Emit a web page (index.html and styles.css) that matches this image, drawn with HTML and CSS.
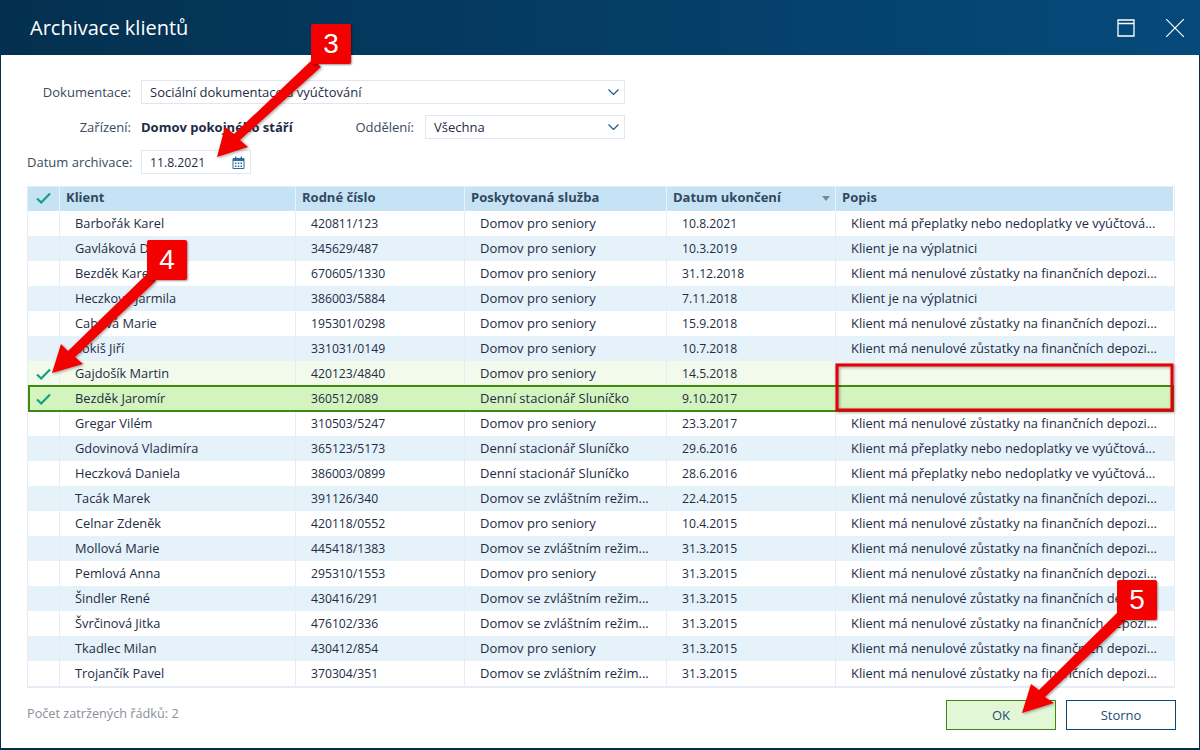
FILE: index.html
```html
<!DOCTYPE html>
<html lang="cs">
<head>
<meta charset="utf-8">
<title>Archivace klientů</title>
<link rel="stylesheet" href="styles.css">
</head>
<body>
<div class="window">
  <header class="titlebar">
    <h1 class="title">Archivace klientů</h1>
    <div class="win-actions">
      <svg class="win-icon" width="18" height="18" viewBox="0 0 18 18"><path d="M1 1h16v16H1zM1 4.500h16" fill="none" stroke="#fff" stroke-width="1.300"/></svg>
      <svg class="win-icon" width="18" height="18" viewBox="0 0 18 18"><path d="M0 0l18 18M18 0L0 18" fill="none" stroke="#fff" stroke-width="1.200"/></svg>
    </div>
  </header>
  <main class="content">
    <div class="form">
      <label class="lbl">Dokumentace:</label>
      <div class="select select-wide"><span>Sociální dokumentace a vyúčtování</span><svg class="chev" width="11" height="6" viewBox="0 0 11 6"><path d="M.5.5l5 5 5-5" fill="none" stroke="#1b5c8c" stroke-width="1.200"/></svg></div>
      <label class="lbl">Zařízení:</label>
      <div class="form-line">
        <strong class="facility">Domov pokojného stáří</strong>
        <label class="lbl lbl-dep">Oddělení:</label>
        <div class="select select-dep"><span>Všechna</span><svg class="chev" width="11" height="6" viewBox="0 0 11 6"><path d="M.5.5l5 5 5-5" fill="none" stroke="#1b5c8c" stroke-width="1.200"/></svg></div>
      </div>
      <label class="lbl">Datum archivace:</label>
      <div class="select select-date"><span>11.8.2021</span>
        <svg class="cal" width="13" height="13" viewBox="0 0 13 13"><path d="M1 2.500h11v10H1z" fill="none" stroke="#2c6d9c"/><path d="M1 2h11v3H1zM3 0.500h1.400v2H3zM8.600 0.500h1.400v2H8.600z" fill="#2c6d9c"/><path d="M3 6.500h1.500V8H3zM5.800 6.500h1.500V8H5.800zM8.500 6.500H10V8H8.500zM3 9.500h1.500V11H3zM5.800 9.500h1.500V11H5.800zM8.500 9.500H10V11H8.500z" fill="#2c6d9c"/></svg>
      </div>
    </div>

    <div class="grid">
      <div class="row head">
        <div class="cell c-check"><svg class="tick" width="15" height="12" viewBox="0 0 15 12"><path d="M1 6.500l4.200 4L14 1.500" fill="none" stroke="#14a07f" stroke-width="2.200"/></svg></div>
        <div class="cell c-name">Klient</div>
        <div class="cell c-id">Rodné číslo</div>
        <div class="cell c-svc">Poskytovaná služba</div>
        <div class="cell c-date">Datum ukončení<span class="sort"></span></div>
        <div class="cell c-desc">Popis</div>
      </div>
      <div class="row"><div class="cell c-check"></div><div class="cell c-name">Barbořák Karel</div><div class="cell c-id">420811/123</div><div class="cell c-svc">Domov pro seniory</div><div class="cell c-date">10.8.2021</div><div class="cell c-desc">Klient má přeplatky nebo nedoplatky ve vyúčtová...</div></div>
      <div class="row"><div class="cell c-check"></div><div class="cell c-name">Gavláková Dana</div><div class="cell c-id">345629/487</div><div class="cell c-svc">Domov pro seniory</div><div class="cell c-date">10.3.2019</div><div class="cell c-desc">Klient je na výplatnici</div></div>
      <div class="row"><div class="cell c-check"></div><div class="cell c-name">Bezděk Karel</div><div class="cell c-id">670605/1330</div><div class="cell c-svc">Domov pro seniory</div><div class="cell c-date">31.12.2018</div><div class="cell c-desc">Klient má nenulové zůstatky na finančních depozi...</div></div>
      <div class="row"><div class="cell c-check"></div><div class="cell c-name">Heczková Jarmila</div><div class="cell c-id">386003/5884</div><div class="cell c-svc">Domov pro seniory</div><div class="cell c-date">7.11.2018</div><div class="cell c-desc">Klient je na výplatnici</div></div>
      <div class="row"><div class="cell c-check"></div><div class="cell c-name">Cabová Marie</div><div class="cell c-id">195301/0298</div><div class="cell c-svc">Domov pro seniory</div><div class="cell c-date">15.9.2018</div><div class="cell c-desc">Klient má nenulové zůstatky na finančních depozi...</div></div>
      <div class="row"><div class="cell c-check"></div><div class="cell c-name">Sokiš Jiří</div><div class="cell c-id">331031/0149</div><div class="cell c-svc">Domov pro seniory</div><div class="cell c-date">10.7.2018</div><div class="cell c-desc">Klient má nenulové zůstatky na finančních depozi...</div></div>
      <div class="row checked"><div class="cell c-check"><svg class="tick" width="15" height="12" viewBox="0 0 15 12"><path d="M1 6.500l4.200 4L14 1.500" fill="none" stroke="#14a07f" stroke-width="2.200"/></svg></div><div class="cell c-name">Gajdošík Martin</div><div class="cell c-id">420123/4840</div><div class="cell c-svc">Domov pro seniory</div><div class="cell c-date">14.5.2018</div><div class="cell c-desc"></div></div>
      <div class="row selected"><div class="cell c-check"><svg class="tick" width="15" height="12" viewBox="0 0 15 12"><path d="M1 6.500l4.200 4L14 1.500" fill="none" stroke="#14a07f" stroke-width="2.200"/></svg></div><div class="cell c-name">Bezděk Jaromír</div><div class="cell c-id">360512/089</div><div class="cell c-svc">Denní stacionář Sluníčko</div><div class="cell c-date">9.10.2017</div><div class="cell c-desc"></div></div>
      <div class="row"><div class="cell c-check"></div><div class="cell c-name">Gregar Vilém</div><div class="cell c-id">310503/5247</div><div class="cell c-svc">Domov pro seniory</div><div class="cell c-date">23.3.2017</div><div class="cell c-desc">Klient má nenulové zůstatky na finančních depozi...</div></div>
      <div class="row"><div class="cell c-check"></div><div class="cell c-name">Gdovinová Vladimíra</div><div class="cell c-id">365123/5173</div><div class="cell c-svc">Denní stacionář Sluníčko</div><div class="cell c-date">29.6.2016</div><div class="cell c-desc">Klient má přeplatky nebo nedoplatky ve vyúčtová...</div></div>
      <div class="row"><div class="cell c-check"></div><div class="cell c-name">Heczková Daniela</div><div class="cell c-id">386003/0899</div><div class="cell c-svc">Denní stacionář Sluníčko</div><div class="cell c-date">28.6.2016</div><div class="cell c-desc">Klient má přeplatky nebo nedoplatky ve vyúčtová...</div></div>
      <div class="row"><div class="cell c-check"></div><div class="cell c-name">Tacák Marek</div><div class="cell c-id">391126/340</div><div class="cell c-svc">Domov se zvláštním režim...</div><div class="cell c-date">22.4.2015</div><div class="cell c-desc">Klient má nenulové zůstatky na finančních depozi...</div></div>
      <div class="row"><div class="cell c-check"></div><div class="cell c-name">Celnar Zdeněk</div><div class="cell c-id">420118/0552</div><div class="cell c-svc">Domov pro seniory</div><div class="cell c-date">10.4.2015</div><div class="cell c-desc">Klient má nenulové zůstatky na finančních depozi...</div></div>
      <div class="row"><div class="cell c-check"></div><div class="cell c-name">Mollová Marie</div><div class="cell c-id">445418/1383</div><div class="cell c-svc">Domov se zvláštním režim...</div><div class="cell c-date">31.3.2015</div><div class="cell c-desc">Klient má nenulové zůstatky na finančních depozi...</div></div>
      <div class="row"><div class="cell c-check"></div><div class="cell c-name">Pemlová Anna</div><div class="cell c-id">295310/1553</div><div class="cell c-svc">Domov pro seniory</div><div class="cell c-date">31.3.2015</div><div class="cell c-desc">Klient má nenulové zůstatky na finančních depozi...</div></div>
      <div class="row"><div class="cell c-check"></div><div class="cell c-name">Šindler René</div><div class="cell c-id">430416/291</div><div class="cell c-svc">Domov se zvláštním režim...</div><div class="cell c-date">31.3.2015</div><div class="cell c-desc">Klient má nenulové zůstatky na finančních depozi...</div></div>
      <div class="row"><div class="cell c-check"></div><div class="cell c-name">Švrčinová Jitka</div><div class="cell c-id">476102/336</div><div class="cell c-svc">Domov se zvláštním režim...</div><div class="cell c-date">31.3.2015</div><div class="cell c-desc">Klient má nenulové zůstatky na finančních depozi...</div></div>
      <div class="row"><div class="cell c-check"></div><div class="cell c-name">Tkadlec Milan</div><div class="cell c-id">430412/854</div><div class="cell c-svc">Domov pro seniory</div><div class="cell c-date">31.3.2015</div><div class="cell c-desc">Klient má nenulové zůstatky na finančních depozi...</div></div>
      <div class="row"><div class="cell c-check"></div><div class="cell c-name">Trojančík Pavel</div><div class="cell c-id">370304/351</div><div class="cell c-svc">Domov se zvláštním režim...</div><div class="cell c-date">31.3.2015</div><div class="cell c-desc">Klient má nenulové zůstatky na finančních depozi...</div></div>
    </div>

    <footer class="footer">
      <span class="count">Počet zatržených řádků: 2</span>
      <div class="buttons">
        <button class="btn btn-ok">OK</button>
        <button class="btn btn-cancel">Storno</button>
      </div>
    </footer>
  </main>

  <svg class="overlay" width="1200" height="750" viewBox="0 0 1200 750">
    <defs>
      <filter id="sh" x="-10%" y="-10%" width="120%" height="120%"><feDropShadow dx="1" dy="1" stdDeviation="1.500" flood-color="#000" flood-opacity=".4"/></filter>
    </defs>
    <rect x="837" y="365" width="335" height="45" fill="none" stroke="#e2000c" stroke-width="3" filter="url(#sh)"/>
    <polygon points="217,157 225,127 234,134 313,59 321,67 240,140 248,147" fill="#f30000" filter="url(#sh)"/>
    <polygon points="52,373 61,344 68,351 148,273 156,281 75,357 83,364" fill="#f30000" filter="url(#sh)"/>
    <polygon points="1022,713 1031,684 1039,690 1118,612 1126,620 1045,697 1054,703" fill="#f30000" filter="url(#sh)"/>
  </svg>
  <div class="badge badge-3">3</div>
  <div class="badge badge-4">4</div>
  <div class="badge badge-5">5</div>
</div>
</body>
</html>
```
FILE: styles.css
```css
* { box-sizing: border-box; }
html, body { margin: 0; padding: 0; }
body {
  width: 1200px;
  height: 750px;
  overflow: hidden;
  font-family: "Open Sans", sans-serif;
  font-size: 13px;
  color: #1e2c45;
  background: #fff;
}
.window {
  position: relative;
  width: 1200px;
  height: 750px;
  display: flex;
  flex-direction: column;
  border: 1px solid #04304f;
  border-top: 0;
  border-bottom-width: 2px;
}
.titlebar {
  flex: 0 0 55px;
  margin: 0 -1px;
  display: flex;
  align-items: center;
  justify-content: space-between;
  padding: 0 16px 0 30px;
  background: linear-gradient(90deg, #04304f 0%, #054a7b 100%);
  color: #fff;
}
.title {
  margin: 0;
  font-size: 20px;
  font-weight: 400;
  line-height: 55px;
}
.win-actions { display: flex; align-items: center; gap: 31px; }
.win-icon { display: block; }
.content {
  flex: 1;
  display: flex;
  flex-direction: column;
  padding: 25px 23px 0 26px;
  min-height: 0;
}
.form {
  display: grid;
  grid-template-columns: 104px 1fr;
  column-gap: 10px;
  row-gap: 11px;
  align-items: center;
  margin-bottom: 12px;
}
.lbl { text-align: right; color: #3a4a60; white-space: nowrap; }
.form-line { display: flex; align-items: center; width: 484px; }
.facility { font-weight: 700; width: 191px; color: #1e2c45; white-space: nowrap; }
.lbl-dep { width: 82px; margin-right: 11px; }
.select {
  display: flex;
  align-items: center;
  justify-content: space-between;
  height: 24px;
  padding: 0 5px 0 8px;
  border: 1px solid #e2e6f2;
  background: #fff;
}
.select-wide { width: 484px; }
.select-dep { width: 200px; }
.select-date { width: 110px; font-size: 12.2px; }
.chev { display: block; }
.cal { display: block; }
.grid {
  width: 1148px;
  height: 502px;
  border: 1px solid #e8ecf7;
  border-width: 1px 1px 2px 1px;
  overflow: hidden;
}
.row { display: flex; height: 25px; background: #fff; }
.row:nth-child(odd) { background: #e6f2fa; }
.row.checked { background: #f2faec; }
.row.selected {
  background: #d3f4bf;
  box-shadow: inset 0 0 0 2px #3f8a0e;
  position: relative;
  margin: -1px 0;
  height: 27px;
}
.row.head {
  background: #c5e3f5;
  font-weight: 700;
  color: #33475f;
  height: 24px;
  margin-right: 1px;
}
.cell {
  height: 100%;
  line-height: 25px;
  white-space: nowrap;
  overflow: hidden;
  border-left: 1px solid #e8ecf7;
  padding-left: 15px;
}
.head .cell { padding-left: 6px; border-left-color: #e8f3fb; position: relative; line-height: 21px; font-size: 13px; }
.c-check { flex: 0 0 31px; border-left: 0; padding: 0; display: flex; align-items: center; justify-content: center; }
.head .c-check { padding: 0 0 2px; }
.c-name { flex: 0 0 236px; font-size: 12.8px; }
.c-id { flex: 0 0 169px; font-size: 12.2px; }
.c-svc { flex: 0 0 202px; }
.c-date { flex: 0 0 169px; font-size: 12.2px; }
.c-desc { flex: 1; font-size: 12.9px; }
.selected .cell { line-height: 27px; border-left-color: transparent; }
.sort {
  position: absolute;
  right: 5px;
  top: 9px;
  width: 0;
  height: 0;
  border-left: 4.5px solid transparent;
  border-right: 4.5px solid transparent;
  border-top: 5px solid #7c8896;
}
.footer {
  flex: 1;
  display: flex;
  align-items: flex-start;
  justify-content: space-between;
  width: 1149px;
  padding-top: 12px;
}
.count { color: #8a8f99; line-height: 27px; font-size: 12.7px; }
.buttons { display: flex; gap: 10px; }
.btn {
  width: 110px;
  height: 30px;
  font: inherit;
  font-size: 13px;
  color: #1c4d75;
  background: #fff;
  padding: 0;
}
.btn-ok { background: #e2f7d6; border: 1px solid #3f8a0e; }
.btn-cancel { border: 1px solid #054a7b; }
.overlay { position: absolute; left: -1px; top: 0; pointer-events: none; }
.badge {
  position: absolute;
  width: 40px;
  height: 40px;
  background: #f30000;
  color: #fff;
  border-radius: 2px;
  font-family: "Liberation Sans", sans-serif;
  font-size: 28px;
  line-height: 40px;
  text-align: center;
  box-shadow: 1px 1px 2px rgba(0, 0, 0, .4);
}
.badge-3 { left: 310px; top: 24px; }
.badge-4 { left: 146px; top: 240px; }
.badge-5 { left: 1116px; top: 580px; }
```
